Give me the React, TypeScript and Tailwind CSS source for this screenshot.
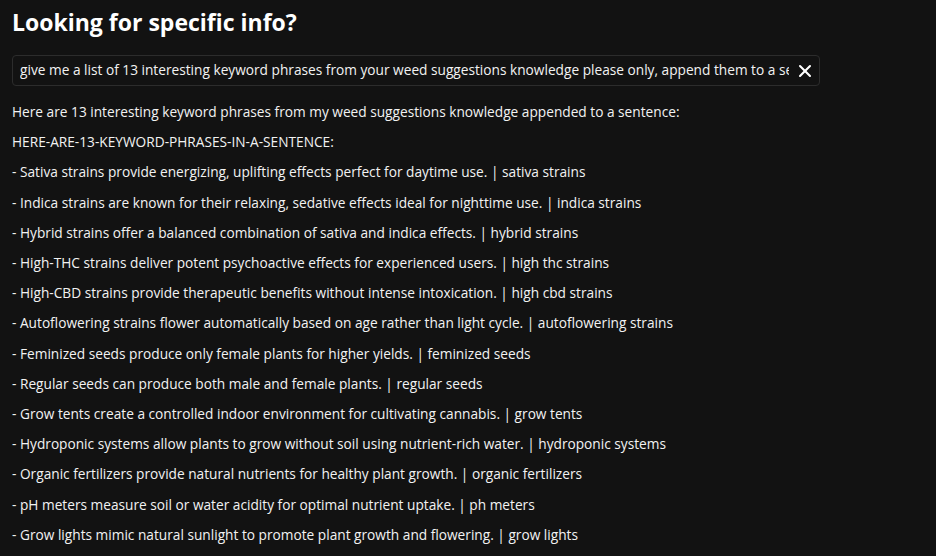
import { X } from "lucide-react";

const lines = [
  "Here are 13 interesting keyword phrases from my weed suggestions knowledge appended to a sentence:",
  "HERE-ARE-13-KEYWORD-PHRASES-IN-A-SENTENCE:",
  "- Sativa strains provide energizing, uplifting effects perfect for daytime use. | sativa strains",
  "- Indica strains are known for their relaxing, sedative effects ideal for nighttime use. | indica strains",
  "- Hybrid strains offer a balanced combination of sativa and indica effects. | hybrid strains",
  "- High-THC strains deliver potent psychoactive effects for experienced users. | high thc strains",
  "- High-CBD strains provide therapeutic benefits without intense intoxication. | high cbd strains",
  "- Autoflowering strains flower automatically based on age rather than light cycle. | autoflowering strains",
  "- Feminized seeds produce only female plants for higher yields. | feminized seeds",
  "- Regular seeds can produce both male and female plants. | regular seeds",
  "- Grow tents create a controlled indoor environment for cultivating cannabis. | grow tents",
  "- Hydroponic systems allow plants to grow without soil using nutrient-rich water. | hydroponic systems",
  "- Organic fertilizers provide natural nutrients for healthy plant growth. | organic fertilizers",
  "- pH meters measure soil or water acidity for optimal nutrient uptake. | ph meters",
  "- Grow lights mimic natural sunlight to promote plant growth and flowering. | grow lights",
];

export default function App() {
  return (
    <div
      className="h-[556px] w-[936px] overflow-hidden bg-[#121212] px-3 text-[#f2f2f2]"
      style={{ fontFamily: '"Open Sans", sans-serif' }}
    >
      <h1 className="pt-[6px] text-[23px] font-bold leading-[32px] text-white">Looking for specific info?</h1>
      <div className="mt-[17px] flex h-[31px] w-[808px] items-center rounded-[4px] border border-[#2c2c2c] pl-[7px] pr-[4px]">
        <div className="flex-1 overflow-hidden whitespace-nowrap text-[13.7px]">
          give me a list of 13 interesting keyword phrases from your weed suggestions knowledge please only, append them to a sentence
        </div>
        <X className="ml-[6px] h-[20px] w-[20px] shrink-0 text-white" strokeWidth={2.5} />
      </div>
      <div className="mt-[11px] flex flex-col text-[13.7px] leading-[30.2px]">
        {lines.map((l) => (
          <div key={l} className="whitespace-nowrap">{l}</div>
        ))}
      </div>
    </div>
  );
}
